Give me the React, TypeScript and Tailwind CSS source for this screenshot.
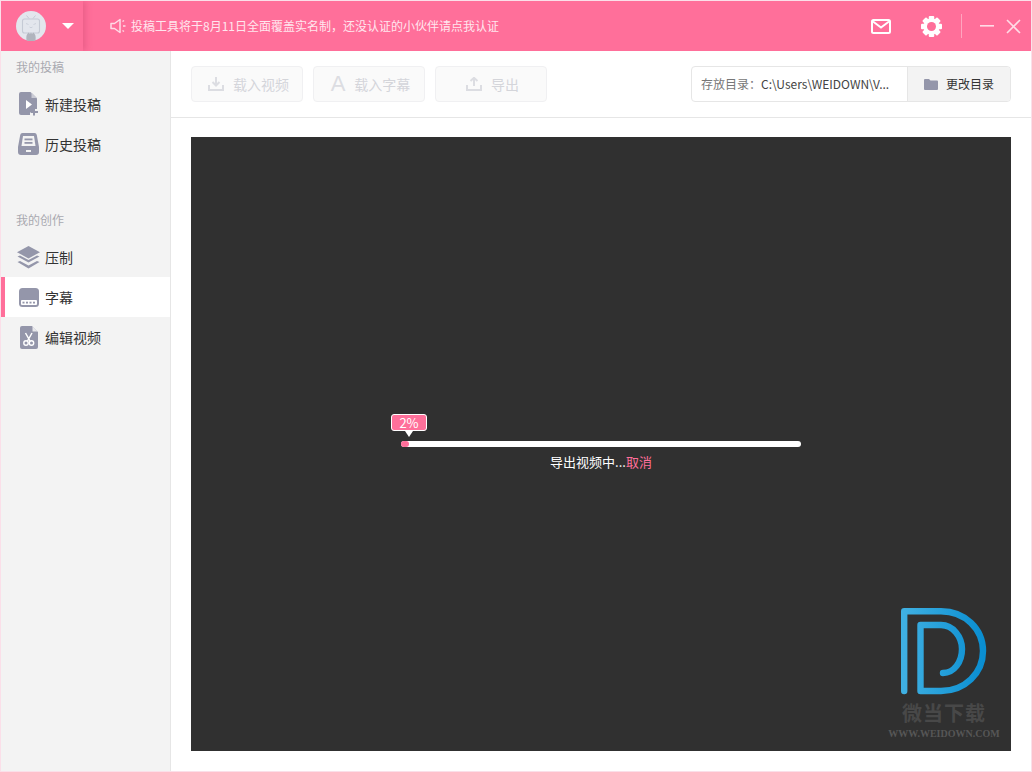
import React from 'react';

const GRAY = '#9496aa';

function AvatarIcon() {
  return (
    <svg width="30" height="30" viewBox="0 0 30 30">
      <circle cx="15" cy="15" r="15" fill="#e3e6ed" />
      <path d="M10.5 4.5 L13 7.5 M19.5 4.5 L17 7.5" stroke="#c5cad5" strokeWidth="1" fill="none" />
      <rect x="6.5" y="8" width="17" height="14" rx="2" fill="#e3e6ed" stroke="#c5cad5" strokeWidth="1.1" />
      <path d="M10 12.5 L12.5 13.5 M20 12.5 L17.5 13.5 M13.5 16 Q15 17.5 16.5 16" stroke="#c5cad5" strokeWidth="0.8" fill="none" />
      <path d="M10.5 29.5 Q10 25 11 23.5 L12.5 21.5 L14 23 L15 21.5 L16 23 L17.5 21.5 L19 23.5 Q20 25 19.5 29.5 Q15 30.5 10.5 29.5 Z" fill="#b0b4bd" />
    </svg>
  );
}

function SpeakerIcon() {
  return (
    <svg width="16" height="16" viewBox="0 0 16 16" fill="none" stroke="#ffdbe6" strokeWidth="1.5">
      <path d="M1 5.5 H4.5 L10 1.5 V14.5 L4.5 10.5 H1 Z" strokeLinejoin="round" />
      <path d="M12.5 3.5 L14 2.5 M13 8 H15.5 M12.5 12.5 L14 13.5" />
    </svg>
  );
}

function MailIcon() {
  return (
    <svg width="20" height="15" viewBox="0 0 20 15" fill="none" stroke="#fff" strokeWidth="2">
      <rect x="1" y="1" width="18" height="13" rx="1.5" />
      <path d="M2 2.5 L10 8.5 L18 2.5" />
    </svg>
  );
}

function GearIcon() {
  return (
    <svg width="21" height="21" viewBox="0 0 21 21">
      <g fill="#fff">
        {[0, 45, 90, 135].map((deg) => (
          <rect key={deg} x="7.75" y="0" width="5.5" height="21" rx="1" transform={`rotate(${deg} 10.5 10.5)`} />
        ))}
      </g>
      <circle cx="10.5" cy="10.5" r="8" fill="#fff" />
      <circle cx="10.5" cy="10.5" r="4.5" fill="#ff6f9a" />
    </svg>
  );
}

function MinimizeIcon() {
  return (
    <svg width="14" height="2" viewBox="0 0 14 2">
      <rect width="14" height="1.6" fill="#ffdbe6" />
    </svg>
  );
}

function CloseIcon() {
  return (
    <svg width="15" height="15" viewBox="0 0 15 15" fill="none" stroke="#ffdbe6" strokeWidth="1.6">
      <path d="M1 1 L14 14 M14 1 L1 14" />
    </svg>
  );
}

function NewPostIcon() {
  return (
    <svg width="20" height="24" viewBox="0 0 20 24">
      <path d="M2 0 H11.5 L18 6.5 V17 H14 V20 H11 V23 H2 Q0 23 0 21 V2 Q0 0 2 0 Z" fill={GRAY} />
      <path d="M12.5 0.5 L18 6 H12.5 Z" fill="#c9cad4" />
      <path d="M7 8 L13 12.5 L7 17 Z" fill="#fff" />
      <path d="M15 16.5 V23.5 M11.5 20 H19" stroke={GRAY} strokeWidth="2" fill="none" />
    </svg>
  );
}

function HistoryIcon() {
  return (
    <svg width="21" height="22" viewBox="0 0 21 22">
      <path d="M4.5 0 H16.5 Q18.5 0 18.8 2 L21 14 V19 Q21 22 18 22 H3 Q0 22 0 19 V14 L2.2 2 Q2.5 0 4.5 0 Z" fill={GRAY} />
      <path d="M5 3 H16 L17.5 13 H3.5 Z" fill="#f3f3f3" />
      <rect x="6.5" y="5.5" width="8" height="1.8" fill={GRAY} />
      <rect x="6.5" y="9" width="8" height="1.8" fill={GRAY} />
      <rect x="8" y="17" width="5" height="2" fill="#f3f3f3" />
    </svg>
  );
}

function LayersIcon() {
  return (
    <svg width="23" height="23" viewBox="0 0 23 23">
      <path d="M11.5 0 L23 6.2 L11.5 12.4 L0 6.2 Z" fill={GRAY} />
      <path d="M0.5 10.5 L3 9.4 L11.5 14 L20 9.4 L22.5 10.5 L11.5 16.6 Z" fill={GRAY} />
      <path d="M0.5 16 L3 14.9 L11.5 19.5 L20 14.9 L22.5 16 L11.5 22.5 Z" fill={GRAY} />
    </svg>
  );
}

function SubtitleIcon() {
  return (
    <svg width="20" height="19" viewBox="0 0 20 19">
      <rect width="20" height="19" rx="3.5" fill={GRAY} />
      <rect x="2" y="12" width="16" height="5" rx="1" fill="#fff" />
      <g fill={GRAY}>
        <rect x="3.5" y="13.7" width="2" height="1.8" />
        <rect x="7" y="13.7" width="2" height="1.8" />
        <rect x="10.5" y="13.7" width="2" height="1.8" />
        <rect x="14" y="13.7" width="2" height="1.8" />
      </g>
    </svg>
  );
}

function EditVideoIcon() {
  return (
    <svg width="18" height="23" viewBox="0 0 18 23">
      <path d="M2 0 H12 L18 6 V21 Q18 23 16 23 H2 Q0 23 0 21 V2 Q0 0 2 0 Z" fill={GRAY} />
      <path d="M12.5 0.3 L17.7 5.5 H12.5 Z" fill="#e8e8ec" />
      <path d="M5.5 7 L10 15 M12 7 L7.5 15" stroke="#fff" strokeWidth="1.5" fill="none" />
      <circle cx="6" cy="17" r="2.2" fill="none" stroke="#fff" strokeWidth="1.4" />
      <circle cx="11.5" cy="17" r="2.2" fill="none" stroke="#fff" strokeWidth="1.4" />
    </svg>
  );
}

function DownloadIcon() {
  return (
    <svg width="16" height="14" viewBox="0 0 16 14" fill="none" stroke="#dcdde2" strokeWidth="2">
      <path d="M8 0 V8 M4.5 5 L8 8.5 L11.5 5" />
      <path d="M1 8 V13 H15 V8" />
    </svg>
  );
}

function UploadIcon() {
  return (
    <svg width="16" height="14" viewBox="0 0 16 14" fill="none" stroke="#dcdde2" strokeWidth="2">
      <path d="M8 9 V1 M4.5 4 L8 0.8 L11.5 4" />
      <path d="M1 8 V13 H15 V8" />
    </svg>
  );
}

function FolderIcon() {
  return (
    <svg width="14" height="11" viewBox="0 0 14 11">
      <path d="M0 1 Q0 0 1 0 H5 L6.5 1.5 H13 Q14 1.5 14 2.5 V10 Q14 11 13 11 H1 Q0 11 0 10 Z" fill={GRAY} />
    </svg>
  );
}

function WeidownLogo() {
  return (
    <svg width="86" height="87" viewBox="0 0 86 87" fill="none">
      <defs>
        <linearGradient id="dGrad" x1="0" y1="0" x2="1" y2="0">
          <stop offset="0" stopColor="#3fb0e2" />
          <stop offset="1" stopColor="#0a8ed1" />
        </linearGradient>
      </defs>
      <path
        d="M3.2 83 V3.2 H40 C64 3.2 82 21 82 43 C82 65 64 83 40 83 H19.5 V17 H40 C52 17 61 29 61 41 C61 54 53 65 42 65"
        stroke="url(#dGrad)"
        strokeWidth="6.4"
        strokeLinecap="round"
        strokeLinejoin="round"
      />
    </svg>
  );
}

const navMain = [
  { label: '新建投稿', icon: NewPostIcon },
  { label: '历史投稿', icon: HistoryIcon },
];

const navCreate = [
  { label: '压制', icon: LayersIcon },
  { label: '字幕', icon: SubtitleIcon, active: true },
  { label: '编辑视频', icon: EditVideoIcon },
];

function NavItem({ label, icon: Icon, active }: { label: string; icon: React.ElementType; active?: boolean }) {
  return (
    <div className={`flex h-10 items-center border-l-4 ${active ? 'border-[#ff6f9a] bg-white' : 'border-transparent'}`}>
      <div className="flex w-[40px] justify-center pl-[7px]">
        <Icon />
      </div>
      <span className="text-[14px] text-[#333]">{label}</span>
    </div>
  );
}

function ToolButton({ label, icon }: { label: string; icon: React.ReactNode }) {
  return (
    <div className="flex h-9 w-28 items-center justify-center gap-[9px] rounded border border-[#f0f0f2] bg-[#fafafa] pl-[3px] text-[14px] text-[#d4d5da]">
      {icon}
      <span>{label}</span>
    </div>
  );
}

export default function App() {
  return (
    <div
      className="flex h-[772px] w-[1032px] flex-col overflow-hidden border border-[#fbdfe9] bg-white"
      style={{ fontFamily: '"Noto Sans CJK SC", "Liberation Sans", sans-serif' }}
    >
      {/* header */}
      <header className="flex h-[50px] shrink-0 items-center bg-[#ff6f9a] text-white">
        <div className="flex h-full w-[82px] items-center bg-[#ff6f9a] pl-[15px] shadow-[3px_0_6px_rgba(190,60,100,0.3)]">
          <AvatarIcon />
          <div className="ml-[16px] h-0 w-0 border-x-[6px] border-t-[6px] border-x-transparent border-t-white" />
        </div>
        <div className="ml-[27px]">
          <SpeakerIcon />
        </div>
        <span className="ml-[5px] text-[12px] text-[#ffe6ee]">{'投稿工具将于8月11日全面覆盖实名制\uff0c还没认证的小伙伴请点我认证'}</span>
        <div className="ml-auto flex items-center pr-[10px]">
          <MailIcon />
          <div className="ml-[30px]">
            <GearIcon />
          </div>
          <div className="ml-[19px] h-6 w-px bg-[#ffa5bf]" />
          <div className="ml-[18px]">
            <MinimizeIcon />
          </div>
          <div className="ml-[12px]">
            <CloseIcon />
          </div>
        </div>
      </header>

      <div className="flex min-h-0 flex-1">
        {/* sidebar */}
        <aside className="flex w-[170px] shrink-0 flex-col border-r border-[#e6e6e6] bg-[#f3f3f3]">
          <div className="flex h-[33px] items-center pb-[1px] pl-[15px] text-[12px] text-[#a9a9b0]">我的投稿</div>
          {navMain.map((item) => (
            <NavItem key={item.label} {...item} />
          ))}
          <div className="mt-[39px] flex h-[34px] items-center pl-[15px] text-[12px] text-[#a9a9b0]">我的创作</div>
          {navCreate.map((item) => (
            <NavItem key={item.label} {...item} />
          ))}
        </aside>

        <main className="flex min-w-0 flex-1 flex-col">
          {/* toolbar */}
          <div className="flex h-[67px] shrink-0 items-center gap-[10px] border-b border-[#e6e6e6] px-5">
            <ToolButton label="载入视频" icon={<DownloadIcon />} />
            <ToolButton
              label="载入字幕"
              icon={<span className="text-[22px] leading-none text-[#dcdde2]" style={{ fontFamily: '"Liberation Sans", sans-serif' }}>A</span>}
            />
            <ToolButton label="导出" icon={<UploadIcon />} />
            <div className="ml-auto flex h-9 w-80 items-stretch overflow-hidden rounded border border-[#e6e6e6] text-[12px]">
              <div className="flex min-w-0 flex-1 items-center pl-[9px]">
                <span className="whitespace-nowrap text-[#777]">{'存放目录\uff1a'}</span>
                <span className="whitespace-nowrap text-[#444]">C:\Users\WEIDOWN\V...</span>
              </div>
              <div className="flex w-[103px] shrink-0 items-center justify-center gap-[8px] border-l border-[#e6e6e6] bg-[#f3f3f3] text-[#333]">
                <FolderIcon />
                <span>更改目录</span>
              </div>
            </div>
          </div>

          {/* preview */}
          <div className="flex-1 px-5 pt-[19px] pb-5">
            <div className="relative flex h-[614px] items-center justify-center bg-[#303030]">
              <div className="w-[400px]">
                <div className="relative h-[6px] rounded-full bg-white">
                  <div className="h-full w-[8px] rounded-full bg-[#ff6f9a]" />
                  <div className="absolute left-[-10px] top-[-27px] flex h-[17px] w-[36px] items-center justify-center rounded-[3px] border border-white bg-[#ff6f9a] text-[13px] text-white">
                    2%
                    <div className="absolute left-[13px] top-[16px] h-0 w-0 border-x-[4px] border-t-[6px] border-x-transparent border-t-white" />
                  </div>
                  <div className="absolute left-0 right-0 top-[11px] text-center text-[13px] leading-[19px] text-white">
                    导出视频中...<span className="text-[#ff6f9a]">取消</span>
                  </div>
                </div>
              </div>

              {/* watermark */}
              <div className="absolute bottom-[11px] right-[12px] flex w-[110px] flex-col items-center">
                <WeidownLogo />
                <div className="mt-[5px] text-[20px] leading-[26px] font-bold tracking-[1px] text-[#484848]">微当下载</div>
                <div
                  className="mt-[2px] text-[10px] leading-[12px] font-bold whitespace-nowrap text-[#565656]"
                  style={{ fontFamily: '"Liberation Serif", serif' }}
                >
                  WWW.WEIDOWN.COM
                </div>
              </div>
            </div>
          </div>
        </main>
      </div>
    </div>
  );
}
